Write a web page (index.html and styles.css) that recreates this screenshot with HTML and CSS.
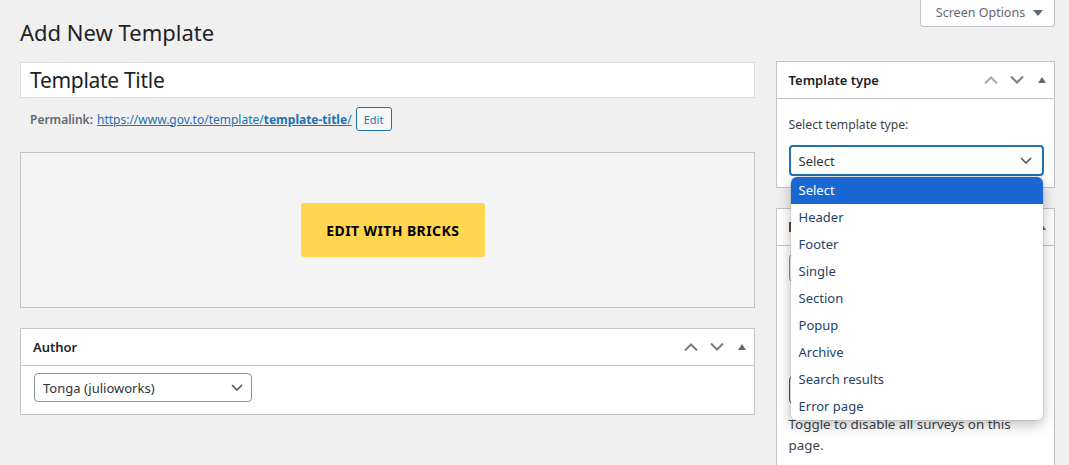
FILE: index.html
```html
<!DOCTYPE html>
<html lang="en">
<head>
<meta charset="utf-8">
<title>Add New Template</title>
<link rel="stylesheet" href="styles.css">
</head>
<body>
<div class="wrap">
  <div class="head">
    <h1 class="page-title">Add New Template</h1>
    <button class="screen-options">Screen Options <span class="so-caret"></span></button>
  </div>
  <div class="columns">
    <div class="main">
      <div class="title-input">Template Title</div>
      <div class="permalink">
        <span class="pl-label">Permalink:</span>
        <a class="pl-link" href="#">https://www.gov.to/template/<b>template-title</b>/</a>
        <button class="pl-edit">Edit</button>
      </div>
      <div class="bricks-box">
        <button class="bricks-btn">EDIT WITH BRICKS</button>
      </div>
      <div class="postbox author-box">
        <div class="postbox-head">
          <h2 class="postbox-title">Author</h2>
          <div class="handles">
            <svg class="chev" viewBox="0 0 14 8" width="14" height="8"><path d="M1 7.5 L7 1.5 L13 7.5" /></svg>
            <svg class="chev" viewBox="0 0 14 8" width="14" height="8"><path d="M1 0.5 L7 6.5 L13 0.5" /></svg>
            <svg class="tri" viewBox="0 0 8 6" width="8" height="6"><path d="M0 6 L4 0 L8 6 Z" /></svg>
          </div>
        </div>
        <div class="author-inside">
          <div class="fake-select author-select">
            <span>Tonga (julioworks)</span>
            <svg class="sel-chev" viewBox="0 0 12 7" width="12" height="7"><path d="M1 1 L6 6 L11 1" /></svg>
          </div>
        </div>
      </div>
    </div>
    <div class="side">
      <div class="postbox type-box">
        <div class="postbox-head">
          <h2 class="postbox-title">Template type</h2>
          <div class="handles">
            <svg class="chev light" viewBox="0 0 14 8" width="14" height="8"><path d="M1 7.5 L7 1.5 L13 7.5" /></svg>
            <svg class="chev" viewBox="0 0 14 8" width="14" height="8"><path d="M1 0.5 L7 6.5 L13 0.5" /></svg>
            <svg class="tri" viewBox="0 0 8 6" width="8" height="6"><path d="M0 6 L4 0 L8 6 Z" /></svg>
          </div>
        </div>
        <div class="type-inside">
          <p class="type-label">Select template type:</p>
          <div class="select-wrap">
            <div class="fake-select type-select">
              <span>Select</span>
              <svg class="sel-chev" viewBox="0 0 12 7" width="12" height="7"><path d="M1 1 L6 6 L11 1" /></svg>
            </div>
            <ul class="dropdown">
              <li class="active">Select</li>
              <li>Header</li>
              <li>Footer</li>
              <li>Single</li>
              <li>Section</li>
              <li>Popup</li>
              <li>Archive</li>
              <li>Search results</li>
              <li>Error page</li>
            </ul>
          </div>
        </div>
      </div>
      <div class="postbox survey-box">
        <div class="postbox-head">
          <span class="head-mark"></span>
          <div class="handles">
            <svg class="chev" viewBox="0 0 14 8" width="14" height="8"><path d="M1 7.5 L7 1.5 L13 7.5" /></svg>
            <svg class="chev" viewBox="0 0 14 8" width="14" height="8"><path d="M1 0.5 L7 6.5 L13 0.5" /></svg>
            <svg class="tri" viewBox="0 0 8 6" width="8" height="6"><path d="M0 6 L4 0 L8 6 Z" /></svg>
          </div>
        </div>
        <div class="survey-inside">
          <span class="toggle"></span>
          <div class="survey-select"></div>
          <p class="survey-note">Toggle to disable all surveys on this page.</p>
        </div>
      </div>
    </div>
  </div>
</div>
</body>
</html>
```

FILE: styles.css
```css
* { box-sizing: border-box; }

body {
  margin: 0;
  background: #f0f0f1;
  font-family: "Noto Sans", "Open Sans", sans-serif;
  font-size: 12px;
  color: #3c434a;
  overflow: hidden;
}

.wrap {
  padding: 0 14px 0 20px;
}

.head {
  display: flex;
  justify-content: space-between;
  align-items: flex-start;
  height: 61px;
}

.page-title {
  margin: 0;
  padding-top: 16px;
  font-size: 22px;
  font-weight: 400;
  line-height: 32px;
  color: #1d2327;
}

.screen-options {
  width: 135px;
  height: 27px;
  margin: 0;
  padding: 0 0 2px 4px;
  background: #fff;
  border: 1px solid #c3c4c7;
  border-top: none;
  border-radius: 0 0 4px 4px;
  font-family: inherit;
  font-size: 12.5px;
  color: #646970;
  display: flex;
  align-items: center;
  justify-content: center;
  gap: 8px;
}

.so-caret {
  width: 0;
  height: 0;
  border-left: 5px solid transparent;
  border-right: 5px solid transparent;
  border-top: 6px solid #646970;
  margin-top: 1px;
}

.columns {
  display: flex;
  gap: 21px;
  align-items: flex-start;
}

.main {
  width: 736px;
  padding-top: 1px;
}

.side {
  width: 280px;
}

.title-input {
  height: 36px;
  background: #fff;
  border: 1px solid #dcdcde;
  padding: 0 9px;
  font-size: 21px;
  letter-spacing: -0.3px;
  line-height: 34px;
  color: #1d2327;
}

.permalink {
  display: flex;
  align-items: center;
  height: 24px;
  margin-top: 9px;
  padding-left: 10px;
  font-size: 12px;
}

.pl-label {
  font-weight: 600;
  color: #646970;
  margin-right: 4px;
}

.pl-link {
  color: #2271b1;
  text-decoration: underline;
}

.pl-link b { font-weight: 700; }

.pl-edit {
  margin-left: 4px;
  height: 24px;
  width: 36px;
  padding: 0;
  background: #f6f7f7;
  border: 1px solid #2271b1;
  border-radius: 3px;
  color: #2271b1;
  font-family: inherit;
  font-size: 11px;
}

.bricks-box {
  margin-top: 21px;
  height: 156px;
  background: #f4f4f4;
  border: 1px solid #c3c4c7;
  display: flex;
  align-items: center;
  justify-content: center;
}

.bricks-btn {
  margin-left: 11px;
  width: 184px;
  height: 54px;
  background: #ffd64f;
  border: none;
  border-radius: 3px;
  font-family: inherit;
  font-size: 14px;
  font-weight: 700;
  color: #000;
  letter-spacing: 0.4px;
}

.postbox {
  background: #fff;
  border: 1px solid #c3c4c7;
}

.author-box {
  margin-top: 20px;
}

.postbox-head {
  display: flex;
  align-items: center;
  justify-content: space-between;
  height: 37px;
  border-bottom: 1px solid #c3c4c7;
  padding: 0 8px 0 12px;
}

.postbox-title {
  margin: 0;
  font-size: 13px;
  font-weight: 600;
  color: #1d2327;
}

.head-mark {
  width: 8px;
  height: 10px;
  background: #6b4a30;
}

.handles {
  display: flex;
  align-items: center;
  gap: 12px;
}

.chev {
  fill: none;
  stroke: #787c82;
  stroke-width: 2;
}

.chev.light { stroke: #a7aaad; }

.tri {
  fill: #646970;
  margin-left: 2px;
  margin-bottom: 1px;
}

.author-inside {
  padding: 7px 12px 12px 13px;
}

.fake-select {
  display: flex;
  align-items: center;
  justify-content: space-between;
  background: #fff;
  border: 1px solid #8c8f94;
  border-radius: 4px;
  font-size: 13px;
  color: #2c3338;
}

.sel-chev {
  fill: none;
  stroke: #50575e;
  stroke-width: 1.6;
}

.author-select {
  width: 218px;
  height: 29px;
  padding: 0 8px 0 8px;
}

.type-inside {
  padding: 17px 10px 11px 12px;
}

.type-label {
  margin: 0;
  font-size: 12.2px;
  line-height: 18px;
  color: #3c434a;
}

.select-wrap {
  position: relative;
  margin-top: 11px;
  z-index: 5;
}

.type-select {
  height: 31px;
  border: 2px solid #2271b1;
  padding: 0 10px 0 8px;
}

.dropdown {
  position: absolute;
  top: 32px;
  left: 2px;
  width: 252px;
  margin: 0;
  padding: 0;
  list-style: none;
  background: #fff;
  border-radius: 6px;
  box-shadow: 0 4px 14px rgba(0, 0, 0, 0.28), 0 0 0 1px rgba(0, 0, 0, 0.06);
  overflow: hidden;
}

.dropdown li {
  height: 27px;
  line-height: 27px;
  padding-left: 8px;
  font-size: 13px;
  color: #234466;
}

.dropdown li.active {
  background: #1967d2;
  color: #fff;
}

.survey-box {
  margin-top: 20px;
  border-bottom: none;
  min-height: 300px;
}

.survey-inside {
  padding: 8px 25px 0 12px;
}

.toggle {
  display: block;
  width: 36px;
  height: 28px;
  border: 1px solid #8c8f94;
  border-radius: 4px;
}

.survey-select {
  margin-top: 94px;
  margin-right: -13px;
  height: 28px;
  border: 1px solid #50575e;
  border-radius: 4px;
}

.survey-note {
  margin: 10px 0 0 0;
  font-size: 13.4px;
  line-height: 21px;
  color: #3c434a;
}
```
